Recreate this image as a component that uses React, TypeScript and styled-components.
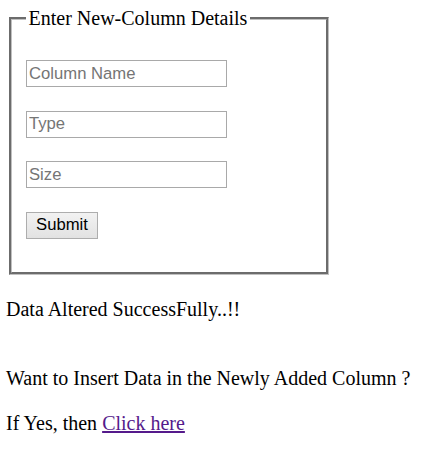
import React from 'react';
import styled, { createGlobalStyle } from 'styled-components';

const GlobalStyle = createGlobalStyle`
  body {
    margin: 0;
    background: #ffffff;
    color: #000000;
    font-family: "Liberation Serif", "Times New Roman", serif;
    font-size: 20px;
  }
`;

const Page = styled.div`
  padding: 7px 6px 0 6px;
`;

const Fieldset = styled.fieldset`
  box-sizing: border-box;
  width: 320px;
  margin: 0 0 0 3px;
  padding: 30px 14px 33px 14px;
  border: 3px groove #c0c0c0;
`;

const Legend = styled.legend`
  padding: 0 2.5px;
  margin-left: 0;
  font-size: 20px;
  line-height: 23px;
`;

const Fields = styled.div`
  display: flex;
  flex-direction: column;
  align-items: flex-start;
  gap: 23.6px;
`;

const TextInput = styled.input`
  box-sizing: border-box;
  width: 201px;
  height: 27px;
  margin: 0;
  padding: 1px 2px;
  border: 1px solid #a9a9a9;
  background: #ffffff;
  font-family: "Liberation Sans", Arial, sans-serif;
  font-size: 16.67px;
  color: #000000;
  outline: none;

  &::placeholder {
    color: #757575;
  }
`;

const SubmitButton = styled.button`
  box-sizing: border-box;
  width: 72px;
  height: 27px;
  margin: 0;
  padding: 0;
  border: 1px solid #adadad;
  background: linear-gradient(#f2f2f2, #e2e2e2);
  font-family: "Liberation Sans", Arial, sans-serif;
  font-size: 16.67px;
  color: #000000;
`;

const Message = styled.p<{ $gap: number }>`
  margin: ${({ $gap }) => $gap}px 0 0 0;
  line-height: 23px;
`;

const Link = styled.a`
  color: #551a8b;
  text-decoration: underline;
`;

export default function App() {
  return (
    <>
      <GlobalStyle />
      <Page>
        <Fieldset>
          <Legend>Enter New-Column Details</Legend>
          <Fields>
            <TextInput type="text" placeholder="Column Name" />
            <TextInput type="text" placeholder="Type" />
            <TextInput type="text" placeholder="Size" />
            <SubmitButton type="button">Submit</SubmitButton>
          </Fields>
        </Fieldset>
        <Message $gap={23}>Data Altered SuccessFully..!!</Message>
        <Message $gap={46}>Want to Insert Data in the Newly Added Column ?</Message>
        <Message $gap={22}>
          If Yes, then <Link href="#">Click here</Link>
        </Message>
      </Page>
    </>
  );
}
